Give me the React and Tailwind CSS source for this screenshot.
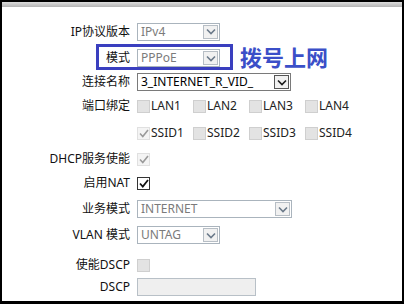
import React from "react";

const FONT = { fontFamily: '"Noto Sans", "Noto Sans CJK SC", sans-serif' };

function Chevron({ dark }) {
  return (
    <svg width="10" height="7" viewBox="0 0 10 7">
      <path d="M1 1.5 L5 5.5 L9 1.5" fill="none" stroke={dark ? "#1a1a1a" : "#6b7a8a"} strokeWidth="1.6" />
    </svg>
  );
}

function Select({ value, width, enabled }) {
  return (
    <div
      className={`flex h-[18px] items-center border ${enabled ? "border-[#7a7a7a] text-black" : "border-[#aab4bd] text-[#7b7b7b]"} bg-white`}
      style={{ width }}
    >
      <span className="min-w-0 flex-1 overflow-hidden whitespace-nowrap pl-[3px] text-[12px] leading-[16px]">{value}</span>
      <span
        className={`mr-px flex h-[14px] w-[15px] shrink-0 items-center justify-center border ${enabled ? "border-[#555]" : "border-[#b7bec5]"} bg-[#f1f1f1]`}
      >
        <Chevron dark={enabled} />
      </span>
    </div>
  );
}

function Check({ checked, disabled }) {
  if (!disabled) {
    return (
      <span className="flex h-[13px] w-[13px] items-center justify-center border border-[#333] bg-white">
        <svg width="10" height="9" viewBox="0 0 10 9">
          <path d="M1 4.5 L3.8 7.5 L9 1" fill="none" stroke="#111" strokeWidth="1.8" />
        </svg>
      </span>
    );
  }
  return (
    <span
      className={`flex h-[13px] w-[13px] items-center justify-center border ${checked ? "border-[#e0e0e0] bg-[#f4f4f4]" : "border-[#cfcfcf] bg-[#e3e3e3]"}`}
    >
      {checked && (
        <svg width="10" height="9" viewBox="0 0 10 9">
          <path d="M1 4.5 L3.8 7.5 L9 1" fill="none" stroke="#9a9a9a" strokeWidth="1.6" />
        </svg>
      )}
    </span>
  );
}

function Row({ label, h, className = "", children }) {
  return (
    <div className={`flex items-center ${className}`} style={{ height: h }}>
      <div className="w-[129px] shrink-0 pr-px text-right text-[12px] leading-none text-[#111]">{label}</div>
      <div className="ml-[6px] flex items-center">{children}</div>
    </div>
  );
}

function Boxes({ items, checkedFirst }) {
  return (
    <div className="flex">
      {items.map((it, i) => (
        <div key={it} className="flex w-[56px] items-center">
          <Check checked={checkedFirst && i === 0} disabled />
          <span className="ml-px text-[12px] leading-none text-[#222]">{it}</span>
        </div>
      ))}
    </div>
  );
}

export default function App() {
  return (
    <div className="h-[304px] w-[404px] bg-black pb-[3px] pl-[2px] pr-[2px] pt-[2px]" style={FONT}>
      <div className="flex h-full flex-col bg-white">
        <div className="h-[5px] shrink-0 bg-gradient-to-b from-[#dcdcdc] to-[#b4b4b4]" />
        <div className="pt-[11px]">
          <Row label="IP协议版本" h={27}>
            <Select value="IPv4" width={83} />
          </Row>
          <Row label="模式" h={26} className="relative">
            <Select value="PPPoE" width={83} />
            <div className="absolute left-[94px] top-[-1px] h-[26px] w-[137px] border-[3px] border-[#3a3fbf]" />
            <span className="absolute left-[238px] top-[0px] text-[22px] font-bold leading-[24px] text-[#3b4fc8]">
              拨号上网
            </span>
          </Row>
          <Row label="连接名称" h={22}>
            <Select value="3_INTERNET_R_VID_" width={154} enabled />
          </Row>
          <Row label="端口绑定" h={26}>
            <Boxes items={["LAN1", "LAN2", "LAN3", "LAN4"]} />
          </Row>
          <Row label="" h={28}>
            <Boxes items={["SSID1", "SSID2", "SSID3", "SSID4"]} checkedFirst />
          </Row>
          <Row label="DHCP服务使能" h={24}>
            <Check checked disabled />
          </Row>
          <Row label="启用NAT" h={24}>
            <Check checked />
          </Row>
          <Row label="业务模式" h={28}>
            <Select value="INTERNET" width={155} />
          </Row>
          <Row label="VLAN 模式" h={24}>
            <Select value="UNTAG" width={83} />
          </Row>
          <Row label="使能DSCP" h={26} className="mt-[5px]">
            <Check disabled />
          </Row>
          <Row label="DSCP" h={18}>
            <div className="h-[18px] w-[119px] border border-[#b8c0c7] bg-[#efefef]" />
          </Row>
        </div>
      </div>
    </div>
  );
}
